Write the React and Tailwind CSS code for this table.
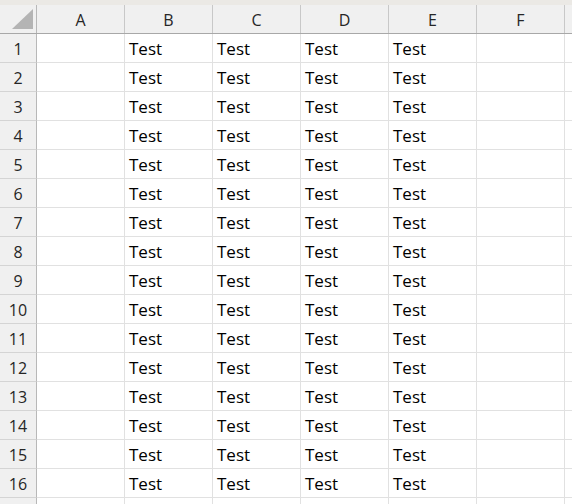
import React from "react";

const cols = ["A", "B", "C", "D", "E", "F"];
const rows = Array.from({ length: 17 }, (_, i) => i + 1);

export default function App() {
  return (
    <div className="w-[572px] h-[504px] overflow-hidden bg-white" style={{ fontFamily: '"Open Sans", "Noto Sans", sans-serif' }}>
      <div className="h-[5px] bg-[#ebe9e5]" />
      <div className="flex h-[29px] bg-[#f0f0f0] border-b border-[#a8a8a8]">
        <div className="w-[37px] shrink-0 border-r border-[#b8b8b8] relative">
          <svg className="absolute left-[12px] top-[4px]" width="22" height="21" viewBox="0 0 22 21">
            <polygon points="21,0 21,20 0,20" fill="#b4b4b4" />
          </svg>
        </div>
        {cols.map((c) => (
          <div key={c} className="w-[88px] shrink-0 border-r border-[#c8c8c8] flex items-center justify-center pt-[1px] text-[16px] text-[#262626]">
            {c}
          </div>
        ))}
        <div className="flex-1" />
      </div>
      {rows.map((r) => (
        <div key={r} className="flex h-[29px]">
          <div className="w-[37px] shrink-0 bg-[#f0f0f0] border-r border-b border-r-[#b8b8b8] border-b-[#d4d4d4] flex items-center justify-center pt-[1px] text-[16px] text-[#262626]">
            {r <= 16 ? r : ""}
          </div>
          {cols.map((c) => (
            <div key={c} className="w-[88px] shrink-0 border-r border-b border-[#e1e1e1] flex items-center pl-[4px] pt-[1px] text-[17px] text-black">
              {r <= 16 && c !== "A" && c !== "F" ? "Test" : ""}
            </div>
          ))}
          <div className="flex-1 border-b border-[#e1e1e1]" />
        </div>
      ))}
    </div>
  );
}
